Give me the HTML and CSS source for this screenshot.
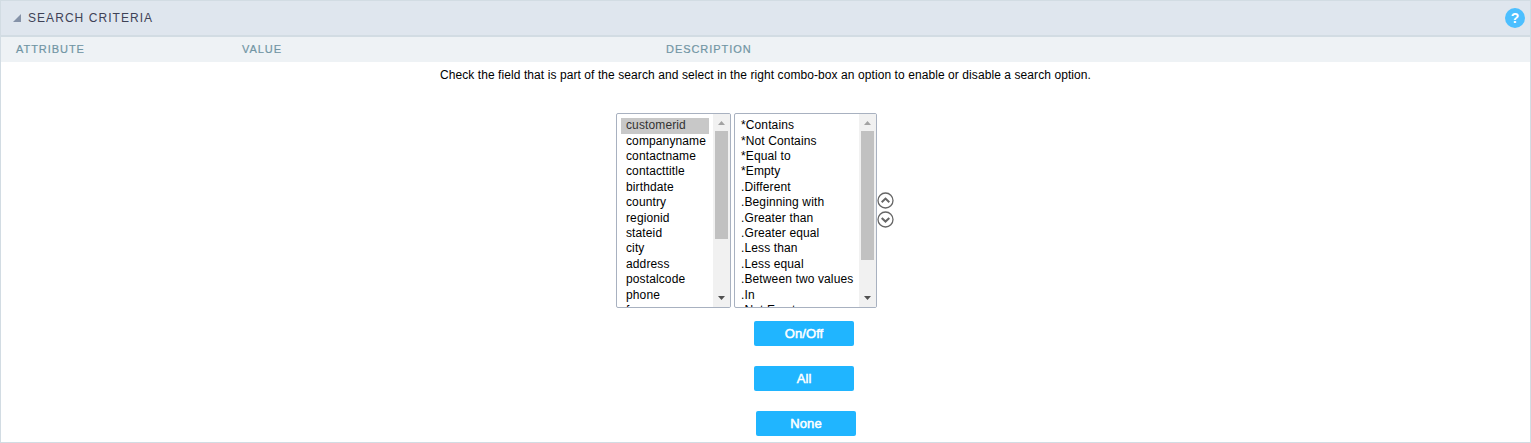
FILE: index.html
```html
<!DOCTYPE html>
<html lang="en">
<head>
<meta charset="utf-8">
<title>Search Criteria</title>
<link rel="stylesheet" href="styles.css">
</head>
<body>
<section class="panel">
  <header class="panel-header">
    <svg class="toggle" width="8" height="8" viewBox="0 0 8 8"><path d="M8 0V8H0Z"/></svg>
    <h1 class="title">SEARCH CRITERIA</h1>
    <span class="help">?</span>
  </header>
  <div class="columns"><span>ATTRIBUTE</span><span>VALUE</span><span>DESCRIPTION</span></div>
  <p class="hint"><span>Check the field that is part of the search and select in the right combo-box an option to enable or disable a search option.</span></p>
  <div class="lists">
    <div class="listbox fields">
      <ul class="options">
        <li class="selected">customerid</li><li>companyname</li><li>contactname</li><li>contacttitle</li><li>birthdate</li><li>country</li><li>regionid</li><li>stateid</li><li>city</li><li>address</li><li>postalcode</li><li>phone</li><li>fax</li>
      </ul>
      <div class="scrollbar">
        <svg class="up" width="7" height="4" viewBox="0 0 7 4"><path d="M3.5 0L7 4H0Z"/></svg>
        <div class="thumb"></div>
        <svg class="down" width="7" height="4" viewBox="0 0 7 4"><path d="M0 0H7L3.5 4Z"/></svg>
      </div>
    </div>
    <div class="listbox operators">
      <ul class="options">
        <li>*Contains</li><li>*Not Contains</li><li>*Equal to</li><li>*Empty</li><li>.Different</li><li>.Beginning with</li><li>.Greater than</li><li>.Greater equal</li><li>.Less than</li><li>.Less equal</li><li>.Between two values</li><li>.In</li><li>.Not Empty</li>
      </ul>
      <div class="scrollbar">
        <svg class="up" width="7" height="4" viewBox="0 0 7 4"><path d="M3.5 0L7 4H0Z"/></svg>
        <div class="thumb"></div>
        <svg class="down" width="7" height="4" viewBox="0 0 7 4"><path d="M0 0H7L3.5 4Z"/></svg>
      </div>
    </div>
    <div class="movers">
      <svg width="17" height="17" viewBox="0 0 17 17"><circle cx="8.5" cy="8.5" r="7.5"/><path d="M4.7 10.2L8.5 6.6L12.3 10.2"/></svg>
      <svg width="17" height="17" viewBox="0 0 17 17"><circle cx="8.5" cy="8.5" r="7.5"/><path d="M4.7 7L8.5 10.6L12.3 7"/></svg>
    </div>
  </div>
  <div class="actions">
    <button class="btn">On/Off</button>
    <button class="btn">All</button>
    <button class="btn none">None</button>
  </div>
</section>
</body>
</html>
```

FILE: styles.css
```css
* { box-sizing: border-box; }
body { margin: 0; background: #fff; font-family: "Liberation Sans", Arial, sans-serif; font-size: 12px; color: #000; overflow: hidden; }
.panel { height: 443px; border: 1px solid #d2dce3; display: flex; flex-direction: column; }
.panel-header { height: 36px; flex: none; display: flex; align-items: center; padding: 0 5px 0 12px; background: #dfe6ee; border-bottom: 2px solid #d2dce3; }
.toggle { fill: #8592a8; margin-right: 7px; }
.title { margin: 0; font-size: 12px; line-height: 14px; font-weight: 400; letter-spacing: 1.05px; color: #3e4256; flex: 1; }
.help { width: 20px; height: 20px; border-radius: 50%; background: #4cbfff; color: #fff; font-size: 14px; font-weight: 700; line-height: 20px; text-align: center; }
.columns { flex: none; height: 25px; display: grid; grid-template-columns: 226px 424px 1fr; padding-left: 15px; background: #eef2f5; color: #7195a4; font-size: 11px; line-height: 24px; letter-spacing: .95px; -webkit-text-stroke: .2px #7195a4; }
.hint { margin: 5px 0 0; height: 16px; line-height: 16px; text-align: center; white-space: nowrap; letter-spacing: .081px; }
.lists { margin: 30px 0 0 615px; height: 195px; display: flex; }
.listbox { display: flex; height: 195px; border: 1px solid #a8b1c0; border-radius: 2px; overflow: hidden; }
.fields { width: 115px; margin-right: 3px; }
.operators { width: 143px; }
.options { list-style: none; margin: 0; padding: 4.25px 4px 0; flex: 1; height: 193px; overflow: hidden; white-space: nowrap; line-height: 15.4px; letter-spacing: .12px; }
.options li { height: 15.4px; padding-left: 5px; }
.operators .options li { padding-left: 2px; }
.options .selected { background: #c8c8c8; color: #333; }
.scrollbar { width: 17px; flex: none; background: #f1f1f1; display: flex; flex-direction: column; align-items: center; padding: 7px 0; }
.thumb { width: 13px; height: 108px; margin-top: 6px; background: #c1c1c1; }
.operators .thumb { height: 129px; }
.up { fill: #a3a3a3; flex: none; }
.down { fill: #505050; margin-top: auto; flex: none; }
.movers { display: flex; flex-direction: column; gap: 2px; padding-top: 79px; margin-left: -.5px; }
.movers svg { fill: none; stroke: #666; stroke-width: 1.3; }
.movers path { stroke-width: 2; }
.actions { margin: 13px 0 0 753px; display: flex; flex-direction: column; gap: 20px; align-items: flex-start; }
.btn { width: 100px; height: 25px; padding: 0; border: 0; border-radius: 2px; background: #20b5ff; color: #fff; font: 400 13px/25px "Liberation Sans", Arial, sans-serif; -webkit-text-stroke: .5px #fff; letter-spacing: .1px; }
.none { margin-left: 2px; }
```
